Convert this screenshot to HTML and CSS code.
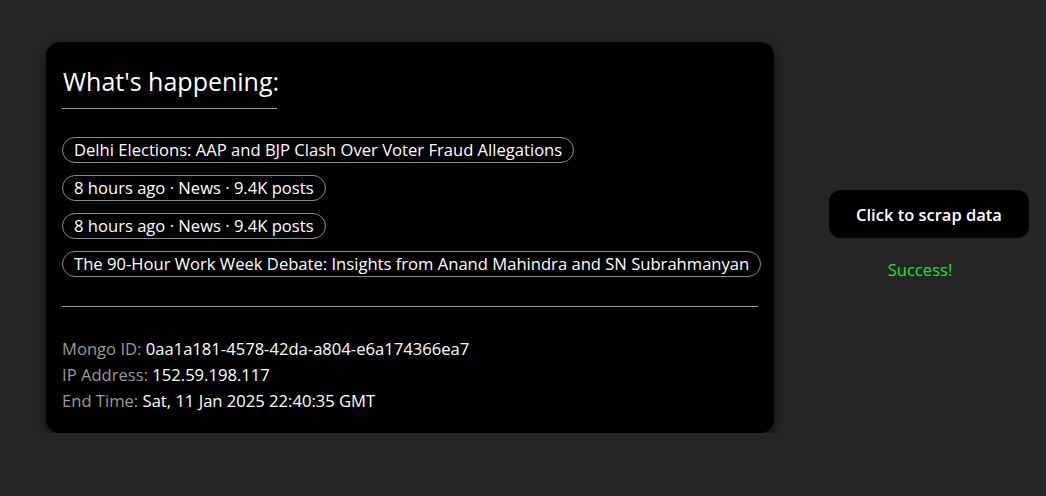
FILE: index.html
```html
<!DOCTYPE html>
<html>
<head>
<meta charset="utf-8">
<link rel="stylesheet" href="styles.css">
</head>
<body>
<div class="page">
  <div class="card">
    <h2 class="title">What's happening:</h2>
    <div class="title-rule"></div>
    <ul class="trends">
      <li class="pill">Delhi Elections: AAP and BJP Clash Over Voter Fraud Allegations</li>
      <li class="pill">8 hours ago · News · 9.4K posts</li>
      <li class="pill">8 hours ago · News · 9.4K posts</li>
      <li class="pill">The 90-Hour Work Week Debate: Insights from Anand Mahindra and SN Subrahmanyan</li>
    </ul>
    <div class="rule"></div>
    <div class="meta">
      <div><span class="label">Mongo ID:</span> 0aa1a181-4578-42da-a804-e6a174366ea7</div>
      <div><span class="label">IP Address:</span> 152.59.198.117</div>
      <div><span class="label">End Time:</span> Sat, 11 Jan 2025 22:40:35 GMT</div>
    </div>
  </div>
  <div class="side">
    <button class="btn">Click to scrap data</button>
    <div class="status">Success!</div>
  </div>
</div>
</body>
</html>
```
FILE: styles.css
```css
html, body {
  margin: 0;
  padding: 0;
  background: #252525;
  color: #fff;
  font-family: "Open Sans", "Noto Sans", sans-serif;
}
.page {
  display: flex;
  align-items: center;
  padding: 42px 0 0 46px;
  gap: 55px;
}
.card {
  width: 728px;
  box-sizing: border-box;
  background: #000;
  border-radius: 14px;
  padding: 22px 16px 19px 16px;
  box-shadow: 0 4px 10px rgba(0,0,0,0.6);
}
.title {
  margin: 0;
  font-size: 25px;
  font-weight: 400;
  line-height: 34px;
  padding-left: 1px;
}
.title-rule {
  width: 215px;
  height: 1px;
  background: #9a9a9a;
  margin-top: 10px;
}
.trends {
  list-style: none;
  margin: 28px 0 0 0;
  padding: 0;
  display: flex;
  flex-direction: column;
  align-items: flex-start;
  gap: 12px;
}
.pill {
  border: 1px solid #8a8a8a;
  border-radius: 14px;
  padding: 0 11px;
  font-size: 16.6px;
  line-height: 24px;
  white-space: nowrap;
}
.rule {
  height: 1px;
  background: #9a9a9a;
  margin-top: 29px;
}
.meta {
  margin-top: 29px;
  font-size: 16.6px;
  line-height: 26px;
}
.label {
  color: #9a9a9a;
}
.side {
  display: flex;
  flex-direction: column;
  align-items: center;
  gap: 20px;
  padding-bottom: 4px;
}
.btn {
  width: 200px;
  height: 48px;
  background: #000;
  color: #fff;
  border: none;
  border-radius: 12px;
  font-family: "Open Sans", "Noto Sans", sans-serif;
  font-weight: 600;
  font-size: 16.5px;
}
.status {
  color: #1ee81e;
  font-size: 16.6px;
  margin-right: 18px;
}
```
